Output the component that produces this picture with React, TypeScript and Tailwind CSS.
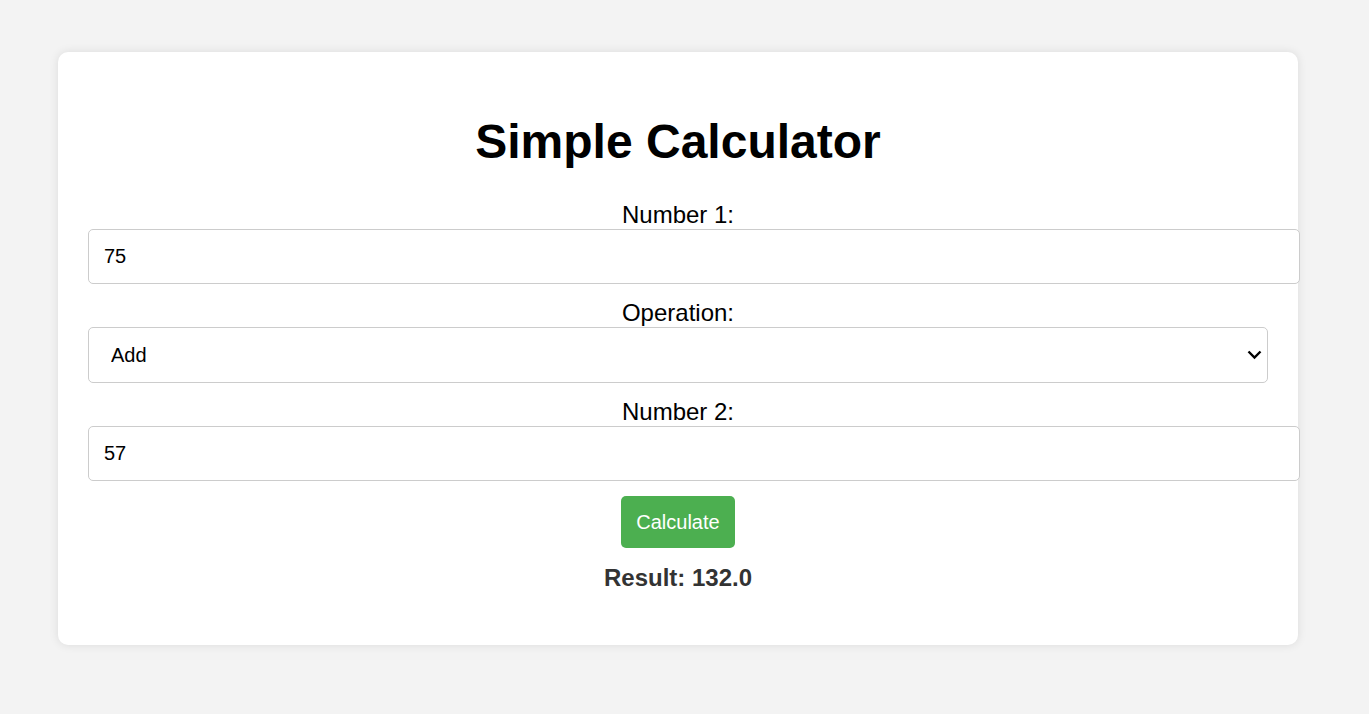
import { useState } from "react";

export default function App() {
  const [num1, setNum1] = useState("75");
  const [num2, setNum2] = useState("57");
  const [op, setOp] = useState("add");
  const [result, setResult] = useState("132.0");

  function calculate() {
    const a = parseFloat(num1);
    const b = parseFloat(num2);
    let r = 0;
    if (op === "add") r = a + b;
    if (op === "subtract") r = a - b;
    if (op === "multiply") r = a * b;
    if (op === "divide") r = a / b;
    setResult(Number.isInteger(r) ? r.toFixed(1) : String(r));
  }

  return (
    <div className="min-h-[714px] bg-[#f3f3f3] pt-[52px] font-['Liberation_Sans',Arial,sans-serif]">
      <div className="ml-[58px] w-[1240px] rounded-[10px] bg-white px-[30px] pt-[62px] pb-[53px] shadow-[0_0_10px_rgba(0,0,0,0.1)]">
        <h1 className="mb-[32px] text-center text-[48px] font-bold leading-[55px] text-black">Simple Calculator</h1>

        <div className="flex flex-col">
          <label className="block h-[28px] text-center text-[24px] leading-[28px] text-black">Number 1:</label>
          <input
            type="number"
            value={num1}
            onChange={(e) => setNum1(e.target.value)}
            className="box-border h-[55px] w-[1212px] rounded-[5px] border border-[#ccc] bg-white px-[15px] text-[20px] text-black outline-none [appearance:textfield] [&::-webkit-inner-spin-button]:appearance-none"
          />

          <label className="mt-[15px] block h-[28px] text-center text-[24px] leading-[28px] text-black">Operation:</label>
          <div className="relative w-[1180px]">
            <select
              value={op}
              onChange={(e) => setOp(e.target.value)}
              className="box-border h-[56px] w-full appearance-none rounded-[5px] border border-[#ccc] bg-white pl-[22px] pr-[30px] text-[20px] text-black outline-none"
            >
              <option value="add">Add</option>
              <option value="subtract">Subtract</option>
              <option value="multiply">Multiply</option>
              <option value="divide">Divide</option>
            </select>
            <svg
              className="pointer-events-none absolute right-[6px] top-[23px]"
              width="15"
              height="10"
              viewBox="0 0 15 10"
              fill="none"
            >
              <path d="M1.5 1.5 L7.5 7.5 L13.5 1.5" stroke="#000" strokeWidth="2.4" />
            </svg>
          </div>

          <label className="mt-[15px] block h-[28px] text-center text-[24px] leading-[28px] text-black">Number 2:</label>
          <input
            type="number"
            value={num2}
            onChange={(e) => setNum2(e.target.value)}
            className="box-border h-[55px] w-[1212px] rounded-[5px] border border-[#ccc] bg-white px-[15px] text-[20px] text-black outline-none [appearance:textfield] [&::-webkit-inner-spin-button]:appearance-none"
          />

          <div className="mt-[15px] flex justify-center">
            <button
              onClick={calculate}
              className="h-[52px] rounded-[5px] bg-[#4caf50] px-[15px] text-[20px] text-white"
            >
              Calculate
            </button>
          </div>

          <p className="mt-[16px] text-center text-[24px] font-bold leading-[28px] text-[#333]">Result: {result}</p>
        </div>
      </div>
    </div>
  );
}
